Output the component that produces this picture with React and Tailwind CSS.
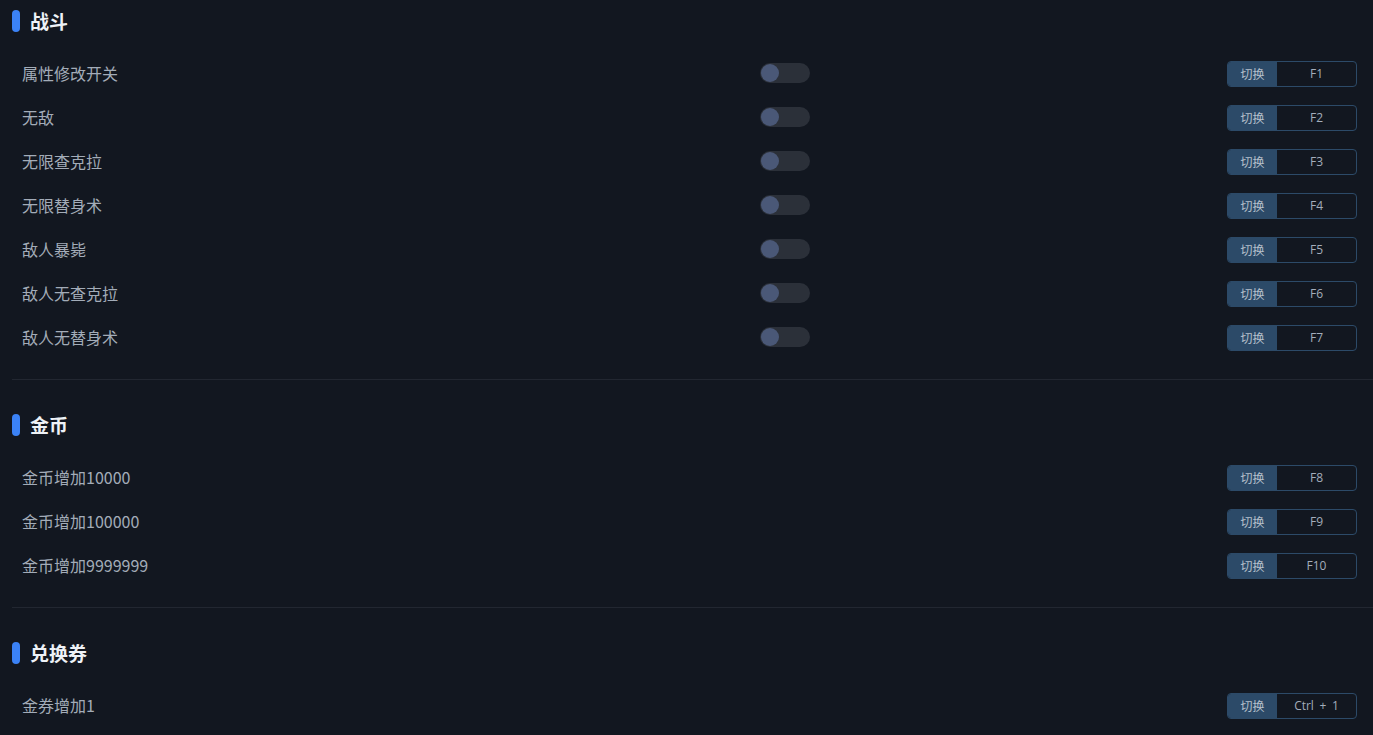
import React from "react";

const sections = [
  {
    title: "战斗",
    rows: [
      ["属性修改开关", "F1", true],
      ["无敌", "F2", true],
      ["无限查克拉", "F3", true],
      ["无限替身术", "F4", true],
      ["敌人暴毙", "F5", true],
      ["敌人无查克拉", "F6", true],
      ["敌人无替身术", "F7", true],
    ],
  },
  {
    title: "金币",
    rows: [
      ["金币增加10000", "F8", false],
      ["金币增加100000", "F9", false],
      ["金币增加9999999", "F10", false],
    ],
  },
  {
    title: "兑换券",
    rows: [["金券增加1", "Ctrl + 1", false]],
  },
];

const font = { fontFamily: '"Noto Sans CJK SC", "Noto Sans", sans-serif' };

function Row({ label, keyName, toggle }) {
  return (
    <div className="grid h-[44px] grid-cols-[738px_50px_1fr] items-center">
      <div className="text-[16px] text-[#a3acb8]">{label}</div>
      <div>
        {toggle && (
          <div className="flex h-[20px] w-[50px] items-center rounded-full bg-[#2b3039] pl-[1px]">
            <div className="h-[18px] w-[18px] rounded-full bg-[#4a5877]" />
          </div>
        )}
      </div>
      <div className="flex justify-end pt-[2px]">
        <div className="flex h-[26px] w-[130px] overflow-hidden rounded-[4px] border border-[#2c4a68] text-[12px]">
          <div className="flex w-[49px] items-center justify-center bg-[#2c4a68] text-[#b6c0cc]">切换</div>
          <div
            className="flex flex-1 items-center justify-center text-[#a3adbb] [word-spacing:2.5px]"
            style={{ fontFamily: '"Open Sans", "Noto Sans", sans-serif' }}
          >
            {keyName}
          </div>
        </div>
      </div>
    </div>
  );
}

export default function App() {
  return (
    <div className="min-h-screen w-full bg-[#121720] pl-3" style={font}>
      {sections.map((s, i) => (
        <div key={s.title} className={i > 0 ? "border-t border-[#222731] pt-6" : ""}>
          <div className="flex h-[42px] items-center gap-[10px]">
            <div className="h-[22px] w-[8px] rounded-full bg-[#3b82f6]" />
            <div className="text-[19px] font-bold text-[#eef2f7]">{s.title}</div>
          </div>
          <div className="mt-[9px] pb-5 pl-[10px] pr-4">
            {s.rows.map(([l, k, t]) => (
              <Row key={l} label={l} keyName={k} toggle={t} />
            ))}
          </div>
        </div>
      ))}
    </div>
  );
}
